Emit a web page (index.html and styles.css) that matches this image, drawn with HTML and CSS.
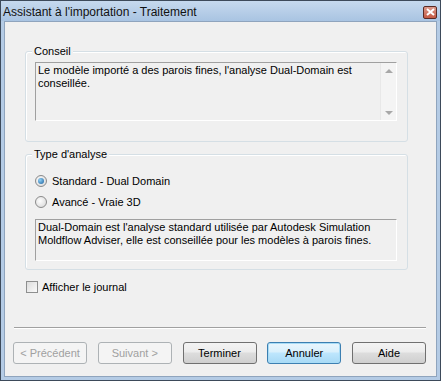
FILE: index.html
```html
<!DOCTYPE html>
<html lang="fr">
<head>
    <meta charset="UTF-8">
    <title>Assistant à l'importation - Traitement</title>
    <link rel="stylesheet" href="styles.css">
</head>
<body>
    <div class="window">
        <div class="titlebar">
            <span class="title">Assistant à l'importation - Traitement</span>
            <span class="close">
                <svg width="9" height="8" viewBox="0 0 9 8">
                    <path d="M1 1 L8 7 M8 1 L1 7" stroke="#fff" stroke-width="2"/>
                </svg>
            </span>
        </div>
        <div class="client">
            <div class="group group-conseil">
                <span class="legend">Conseil</span>
                <div class="textbox tb-conseil">
                    <div class="tb-text">Le modèle importé a des parois fines, l'analyse Dual-Domain est conseillée.</div>
                    <div class="scrollbar">
                        <span class="arrow up"></span>
                        <span class="arrow down"></span>
                    </div>
                </div>
            </div>

            <div class="group group-type">
                <span class="legend">Type d'analyse</span>
                <label class="radio-row">
                    <span class="radio checked"></span>
                    Standard - Dual Domain
                </label>
                <label class="radio-row">
                    <span class="radio"></span>
                    Avancé - Vraie 3D
                </label>
                <div class="textbox tb-desc">
                    <div class="tb-text">Dual-Domain est l'analyse standard utilisée par Autodesk Simulation Moldflow Adviser, elle est conseillée pour les modèles à parois fines.</div>
                </div>
            </div>

            <label class="check-row">
                <span class="checkbox"></span>
                Afficher le journal
            </label>

            <div class="separator"></div>

            <div class="buttons">
                <button class="btn" disabled>&lt; Précédent</button>
                <button class="btn" disabled>Suivant &gt;</button>
                <button class="btn">Terminer</button>
                <button class="btn focused">Annuler</button>
                <button class="btn">Aide</button>
            </div>
        </div>
    </div>
</body>
</html>
```

FILE: styles.css
```css
* {
    box-sizing: border-box;
}
body {
    margin: 0;
    background: #fff;
    font-family: Tahoma, "Liberation Sans", Arial, sans-serif;
    font-size: 11px;
    color: #000;
}
.window {
    width: 441px;
    height: 381px;
    border: 1px solid #3d4a5a;
    background: #b4cbe5;
    padding: 0 3px 3px 3px;
    display: flex;
    flex-direction: column;
}
.titlebar {
    height: 20px;
    flex: none;
    display: flex;
    align-items: center;
    justify-content: space-between;
    background: linear-gradient(#c6d9ee, #a9c4e2);
    margin: 0 -3px;
    padding: 0 3px 0 2px;
}
.title {
    font-size: 12px;
    color: #111;
    padding-top: 1px;
}
.close {
    width: 14px;
    height: 13px;
    border: 1px solid #5a2a24;
    border-radius: 2px;
    background: linear-gradient(#dc9a8c, #c55a44);
    display: flex;
    align-items: center;
    justify-content: center;
    margin-top: 2px;
}
.client {
    flex: 1;
    background: #f0f0f0;
    border: 1px solid #8fa4bd;
    padding: 29px 28px 0 20px;
}
.group {
    position: relative;
    border: 1px solid #d5dfe5;
    border-radius: 3px;
    box-shadow: inset 1px 1px 0 #fff;
    padding: 0 10px 0 9px;
}
.legend {
    position: absolute;
    top: -8px;
    left: 6px;
    padding: 0 2px 0 2px;
    background: #f0f0f0;
    line-height: 14px;
}
.group-conseil {
    height: 91px;
    padding-top: 10px;
}
.group-type {
    margin-top: 12px;
    height: 116px;
    padding-top: 15px;
}
.textbox {
    display: flex;
    border-top: 1px solid #a0a0a0;
    border-left: 1px solid #a0a0a0;
    border-right: 1px solid #fff;
    border-bottom: 1px solid #fff;
}
.tb-text {
    flex: 1;
    padding: 1px 1px 0 2px;
    line-height: 13px;
}
.tb-conseil {
    height: 59px;
}
.tb-desc {
    height: 42px;
    margin-top: 7px;
}
.scrollbar {
    width: 16px;
    background: #f4f4f4;
    border-left: 1px solid #e8e8e8;
    position: relative;
}
.arrow {
    position: absolute;
    left: 4px;
    width: 0;
    height: 0;
    border-left: 4px solid transparent;
    border-right: 4px solid transparent;
}
.arrow.up {
    top: 6px;
    border-bottom: 4px solid #a8a8a8;
}
.arrow.down {
    bottom: 5px;
    border-top: 4px solid #a8a8a8;
}
.radio-row,
.check-row {
    display: flex;
    align-items: center;
    gap: 5px;
    height: 21px;
}
.radio {
    width: 12px;
    height: 12px;
    border-radius: 50%;
    border: 1px solid #8a8a8a;
    background: radial-gradient(circle at 40% 40%, #fdfdfd, #d4d4d4);
    position: relative;
    flex: none;
}
.radio.checked::after {
    content: "";
    position: absolute;
    left: 2px;
    top: 2px;
    width: 6px;
    height: 6px;
    border-radius: 50%;
    background: radial-gradient(circle at 35% 35%, #8fd0f5, #1b5f9c);
}
.check-row {
    margin-top: 6px;
    margin-left: 1px;
    gap: 4px;
}
.checkbox {
    width: 12px;
    height: 12px;
    border: 1px solid #8e8f8f;
    background: linear-gradient(135deg, #dcdcdc, #fafafa);
    flex: none;
}
.separator {
    margin: 30px -18px 0 -11px;
    border-top: 1px solid #a0a0a0;
    border-bottom: 1px solid #fff;
}
.buttons {
    display: flex;
    justify-content: space-between;
    margin: 13px -18px 0 -12px;
}
.btn {
    width: 74px;
    height: 22px;
    font-family: inherit;
    font-size: 11px;
    color: #000;
    border: 1px solid #707070;
    border-radius: 3px;
    background: linear-gradient(#f3f3f3 0%, #ececec 45%, #dddddd 50%, #cfcfcf 100%);
    padding: 0;
}
.btn:disabled {
    color: #a0a0a0;
    border-color: #adb2b5;
    background: #f4f4f4;
}
.btn.focused {
    border-color: #3c7fb1;
    box-shadow: inset 0 0 0 1px #a8dcf6;
    background: linear-gradient(#eaf6fd 0%, #d9f0fc 45%, #bee6fd 50%, #a7d9f5 100%);
}
```
